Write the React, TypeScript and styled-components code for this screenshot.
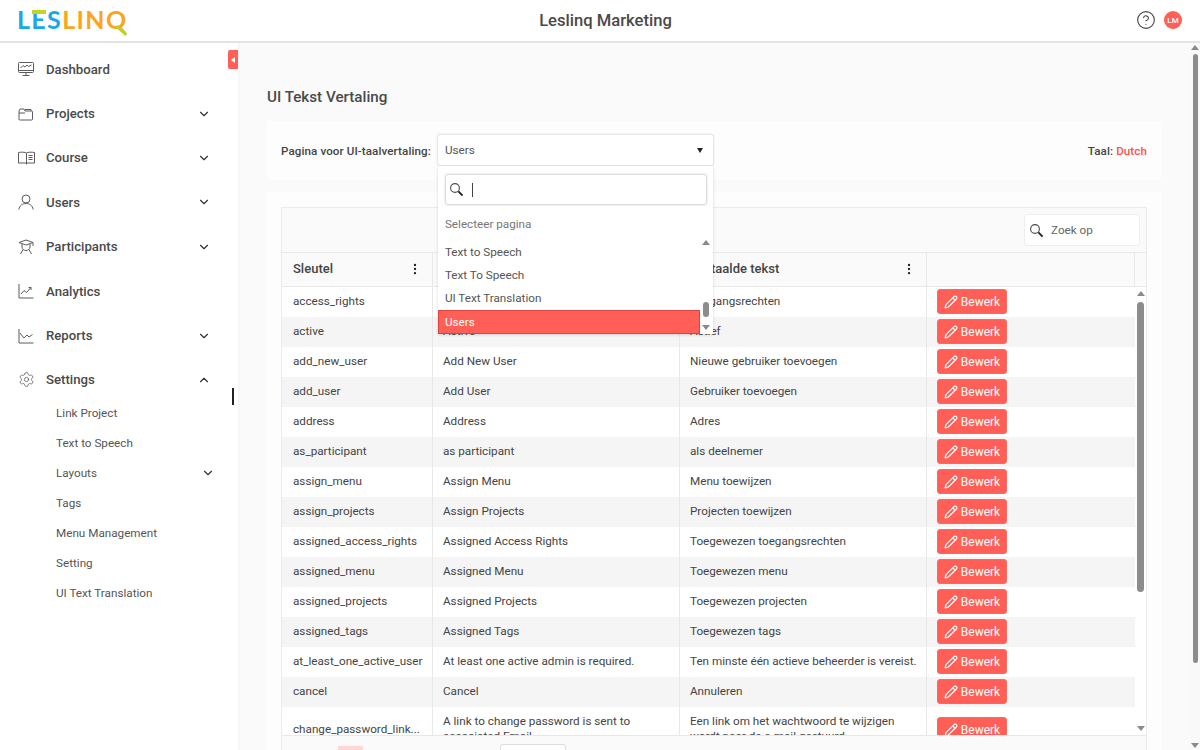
import React from 'react';
import styled, { createGlobalStyle } from 'styled-components';
import { ChevronDown, ChevronUp, CircleHelp, EllipsisVertical, Pencil, Settings } from 'lucide-react';

const GlobalStyle = createGlobalStyle`
  html, body {
    margin: 0;
    height: 100%;
    overflow: hidden;
    font-family: Roboto, "Liberation Sans", sans-serif;
    color: #444;
  }
  * { box-sizing: border-box; }
`;

const Page = styled.div`
  position: relative;
  width: 1200px;
  height: 750px;
  display: flex;
  flex-direction: column;
  overflow: hidden;
  background: #fafafa;
`;

const Header = styled.header`
  flex: 0 0 43px;
  display: flex;
  align-items: center;
  justify-content: space-between;
  padding: 0 18px;
  background: #fff;
  border-bottom: 2px solid #e4e4e4;
`;

const Logo = styled.div`
  width: 130px;
  display: flex;
  font-family: Lato, sans-serif;
  font-size: 25px;
  line-height: 25px;
  font-weight: 700;
  letter-spacing: 1.35px;
  margin-top: -3px;
  margin-left: -1px;
`;

const LogoPart = styled.span<{ $color: string }>`
  color: ${({ $color }) => $color};
`;

const LogoQ = styled.span`
  position: relative;
  color: #f9a61e;

  &::after {
    content: '';
    position: absolute;
    right: -1px;
    bottom: 0;
    width: 13px;
    height: 3px;
    background: #bfd21f;
    transform: rotate(42deg);
  }
`;

const LogoE = styled.span`
  position: relative;
  color: #19a8e8;

  &::before {
    content: '';
    position: absolute;
    left: 1px;
    right: 1px;
    top: 3px;
    height: 4px;
    background: #c4d423;
  }
`;

const HeaderTitle = styled.div`
  font-size: 16.6px;
  font-weight: 500;
  color: #4a4a4a;
`;

const HeaderActions = styled.div`
  width: 118px;
  display: flex;
  align-items: center;
  justify-content: flex-end;
  gap: 8px;
  margin-top: -1px;
`;

const Avatar = styled.div`
  width: 18px;
  height: 18px;
  border-radius: 50%;
  background: #ff5f56;
  color: #fff;
  font-size: 8px;
  font-weight: 500;
  display: flex;
  align-items: center;
  justify-content: center;
`;

const Body = styled.div`
  flex: 1;
  min-height: 0;
  display: flex;
`;

const Sidebar = styled.nav`
  position: relative;
  flex: 0 0 238px;
  background: #fff;
  padding: 4px 0 0 0;
  box-shadow: 1px 0 2px rgba(0, 0, 0, 0.03);
`;

const NavItem = styled.div`
  height: 44.4px;
  display: flex;
  align-items: center;
  padding: 0 27px 0 18px;
  font-size: 13.2px;
  font-weight: 500;
  color: #4a4a4a;
`;

const NavIcon = styled.span`
  width: 28px;
  display: flex;
  color: #5c5c5c;
`;

const NavLabel = styled.span`
  flex: 1;
`;

const SubNav = styled.div`
  display: flex;
  flex-direction: column;
  margin-top: -4px;
`;

const SubItem = styled.div`
  height: 30px;
  display: flex;
  align-items: center;
  justify-content: space-between;
  padding: 0 23px 0 56px;
  font-size: 11.7px;
  color: #555;
`;

const CollapseTab = styled.div`
  position: absolute;
  top: 7px;
  right: 0;
  width: 10px;
  height: 19px;
  background: #ff5f56;
  border-radius: 2px 0 0 2px;
  display: flex;
  align-items: center;
  justify-content: center;

  &::before {
    content: '';
    border-style: solid;
    border-width: 3px 4px 3px 0;
    border-color: transparent #fff transparent transparent;
  }
`;

const MouseCaret = styled.div`
  position: absolute;
  top: 345px;
  left: 232px;
  width: 2px;
  height: 17px;
  background: #222;
`;

const Main = styled.main`
  flex: 1;
  min-width: 0;
  padding: 43px 29px 0 29px;
  display: flex;
  flex-direction: column;
`;

const PageTitle = styled.h1`
  margin: 0 0 13px;
  font-size: 15.2px;
  line-height: 22px;
  font-weight: 500;
  color: #4a4a4a;
`;

const FilterPanel = styled.section`
  height: 59px;
  background: #fdfdfd;
  display: flex;
  align-items: center;
  justify-content: space-between;
  padding: 0 14px;
  margin-bottom: 12px;
  position: relative;
  z-index: 2;
`;

const FilterLeft = styled.div`
  display: flex;
  align-items: center;
  gap: 6px;
`;

const BoldLabel = styled.span`
  font-size: 11.6px;
  font-weight: 500;
  color: #444;
  letter-spacing: 0.1px;
`;

const LangValue = styled.span`
  color: #ff5147;
`;

const SelectWrap = styled.div`
  position: relative;
  width: 277px;
  margin-top: -1px;
`;

const SelectBox = styled.div`
  height: 32px;
  display: flex;
  align-items: center;
  justify-content: space-between;
  padding: 0 10px 0 7px;
  background: #fff;
  border: 1px solid #e8e8e8;
  border-radius: 3px;
  box-shadow: 0 0 2px rgba(0, 0, 0, 0.12);
  font-size: 11.7px;
  color: #555;
`;

const Caret = styled.span`
  border-style: solid;
  border-width: 5px 3.5px 0 3.5px;
  border-color: #222 transparent transparent transparent;
`;

const Dropdown = styled.div`
  position: absolute;
  top: 32px;
  left: 1px;
  right: 1px;
  height: 168px;
  background: #fff;
  box-shadow: 0 1px 3px rgba(0, 0, 0, 0.15);
  display: flex;
  flex-direction: column;
  overflow: hidden;
`;

const DropSearch = styled.div`
  flex: 0 0 31px;
  margin: 8px 6px 0 7px;
  display: flex;
  align-items: center;
  gap: 8px;
  padding-left: 3px;
  border: 1px solid #ddd;
  border-radius: 3px;
  box-shadow: 0 0 2px rgba(0, 0, 0, 0.2);
  color: #555;
`;

const TextCursor = styled.span`
  width: 1px;
  height: 14px;
  background: #444;
`;

const DropHint = styled.div`
  flex: 0 0 32px;
  font-size: 11.7px;
  color: #777;
  padding: 11px 7px 0;
  line-height: 16px;
`;

const DropBody = styled.div`
  flex: 1;
  display: flex;
  min-height: 0;
`;

const DropList = styled.div`
  flex: 1;
  padding-top: 3px;
`;

const DropItem = styled.div<{ $active?: boolean }>`
  height: 23.4px;
  display: flex;
  align-items: center;
  padding-left: ${({ $active }) => ($active ? '6px' : '7px')};
  font-size: 11.7px;
  color: ${({ $active }) => ($active ? '#fff' : '#555')};
  background: ${({ $active }) => ($active ? '#ff5f56' : 'transparent')};
  border: ${({ $active }) => ($active ? '1px solid #d9453d' : 'none')};
`;

const ScrollTrack = styled.div<{ $width: number }>`
  flex: 0 0 ${({ $width }) => $width}px;
  position: relative;
  display: flex;
  flex-direction: column;
  align-items: center;
`;

const DropScroll = styled(ScrollTrack)`
  padding: 3px 0 4px;
`;

const GridScroll = styled(ScrollTrack)`
  padding: 4px 0;
`;

const ScrollUp = styled.span`
  flex: none;
  border-style: solid;
  border-width: 0 4px 5px 4px;
  border-color: transparent transparent #8a8a8a transparent;
`;

const ScrollDown = styled.span`
  flex: none;
  border-style: solid;
  border-width: 5px 4px 0 4px;
  border-color: #8a8a8a transparent transparent transparent;
`;

const ScrollThumb = styled.span<{ $width: number; $height: number; $top: number }>`
  flex: none;
  width: ${({ $width }) => $width}px;
  height: ${({ $height }) => $height}px;
  margin-top: ${({ $top }) => $top}px;
  background: #8c8c8c;
  border-radius: 4px;
`;

const ScrollEnd = styled.span`
  flex: 1;
`;

const GridPanel = styled.section`
  flex: 1;
  min-height: 0;
  background: #fdfdfd;
  padding: 15px 14px 0;
`;

const Grid = styled.div`
  height: 100%;
  display: flex;
  flex-direction: column;
  border: 1px solid #ebebeb;
  border-bottom: none;
  background: #fff;
`;

const GridToolbar = styled.div`
  flex: 0 0 45px;
  display: flex;
  align-items: center;
  justify-content: flex-end;
  padding-right: 6px;
  background: #fafafa;
  border-bottom: 1px solid #e8e8e8;
`;

const SearchBox = styled.div`
  width: 116px;
  height: 32px;
  display: flex;
  align-items: center;
  gap: 7px;
  padding-left: 4px;
  background: #fff;
  border: 1px solid #eee;
  border-radius: 3px;
  font-size: 11.7px;
  color: #666;
`;

const HeadRow = styled.div`
  flex: 0 0 34px;
  display: flex;
  background: #fafafa;
  border-bottom: 1px solid #e8e8e8;
`;

const HeadCell = styled.div<{ $width: number }>`
  flex: 0 0 ${({ $width }) => $width}px;
  display: flex;
  align-items: center;
  justify-content: space-between;
  padding: 0 10px 2px 11px;
  font-size: 13px;
  font-weight: 500;
  color: #444;
  border-right: 1px solid #e8e8e8;
`;

const GridBody = styled.div`
  flex: 1;
  min-height: 0;
  display: flex;
  overflow: hidden;
`;

const Rows = styled.div`
  width: 853px;
`;

const Row = styled.div<{ $height: number; $odd: boolean }>`
  height: ${({ $height }) => $height}px;
  display: flex;
  background: ${({ $odd }) => ($odd ? '#f5f5f5' : '#fff')};
`;

const Cell = styled.div<{ $width: number; $plain?: boolean }>`
  flex: 0 0 ${({ $width }) => $width}px;
  display: flex;
  align-items: center;
  padding: 0 5px ${({ $plain }) => ($plain ? '1px' : '2px')} 10px;
  font-size: 11.7px;
  line-height: 15px;
  color: #444;
  border-right: ${({ $plain }) => ($plain ? 'none' : '1px solid #e8e8e8')};
  overflow: hidden;

  &:first-child {
    padding-left: 11px;
  }
`;

const EditButton = styled.button`
  width: 70px;
  height: 25px;
  display: flex;
  align-items: center;
  justify-content: center;
  gap: 3px;
  padding: 0;
  border: 1px solid #fb6a62;
  border-radius: 3px;
  background: #ff5f56;
  color: #fff;
  font-family: Roboto, sans-serif;
  font-size: 12px;
`;

const GridFooter = styled.div`
  flex: 0 0 15px;
  position: relative;
  background: #fafafa;
  border-top: 1px solid #e8e8e8;
`;

const FooterPage = styled.span`
  position: absolute;
  left: 56px;
  top: 10px;
  width: 25px;
  height: 12px;
  background: #ffd6d3;
`;

const FooterSelect = styled.span`
  position: absolute;
  left: 218px;
  top: 8px;
  width: 66px;
  height: 14px;
  background: #fff;
  border: 1px solid #ddd;
  border-radius: 3px;
`;

const PageScroll = styled(ScrollTrack)`
  background: #f9f9f9;
  padding: 2px 0;
`;

const SearchIcon = () => (
  <svg width="15" height="15" viewBox="0 0 15 15" fill="none" stroke="#4a4a4a">
    <circle cx="6" cy="6" r="4.4" strokeWidth="1.1" />
    <path d="M9.4 9.4 13.6 13.6" strokeWidth="1.9" stroke="#222" />
  </svg>
);

const DashboardIcon = () => (
  <svg width="16" height="16" viewBox="0 0 16 16" fill="none" stroke="currentColor" strokeWidth="1">
    <rect x="0.5" y="1.5" width="15" height="10" rx="1" />
    <path d="M0.5 9.5h15M8 11.5v2.5M4.5 14.5h7M2.5 7l2.5-2.5 2 1.5 2-2 1.5 1.5L13.5 4" />
  </svg>
);

const FolderIcon = () => (
  <svg width="16" height="16" viewBox="0 0 16 16" fill="none" stroke="currentColor" strokeWidth="1">
    <path d="M1 14V5l1-2h4l1 2h6.500c.8 0 1 .5 1 1v7c0 .7-.4 1-1 1H1.500" />
    <path d="M13 5V3.500H7M1 7h6" />
  </svg>
);

const BookIcon = () => (
  <svg width="17" height="16" viewBox="0 0 17 16" fill="none" stroke="currentColor" strokeWidth="1">
    <path d="M8.500 3C7 2 3 2 .5 2.500v10.500h8v1.500M8.500 3c1.500-1 5-1 8-.5V13h-8M8.500 3v10" />
    <path d="M10.500 5.500h4M10.500 7.500h4M10.500 9.500h4" />
  </svg>
);

const UserIcon = () => (
  <svg width="16" height="16" viewBox="0 0 16 16" fill="none" stroke="currentColor" strokeWidth="1">
    <circle cx="8" cy="5" r="4" />
    <path d="M.8 15.500C1.500 11.500 4.500 9.500 8 9.500s6.500 2 7.200 6" />
  </svg>
);

const ParticipantIcon = () => (
  <svg width="16" height="16" viewBox="0 0 16 16" fill="none" stroke="currentColor" strokeWidth="1">
    <path d="M8 1 1 3.500 8 6l7-2.500L8 1ZM4 5v3c0 2 2 3.500 4 3.500S12 10 12 8V5M15 3.500V7M5 10.500 2.500 15M11 10.500l2.500 4.500" />
  </svg>
);

const AnalyticsIcon = () => (
  <svg width="16" height="16" viewBox="0 0 16 16" fill="none" stroke="currentColor" strokeWidth="1">
    <path d="M1 1v14h14.500M3 11l3-3.500 2.500 2L13 4.500M10.500 4.500H13V7" />
  </svg>
);

const ReportsIcon = () => (
  <svg width="16" height="16" viewBox="0 0 16 16" fill="none" stroke="currentColor" strokeWidth="1">
    <path d="M1 1v14h14.500M2 5l4 5 3-3 2 2 3.500-2.500" />
  </svg>
);

const navTop = [
  { label: 'Dashboard', icon: <DashboardIcon /> },
  { label: 'Projects', icon: <FolderIcon />, more: true },
  { label: 'Course', icon: <BookIcon />, more: true },
  { label: 'Users', icon: <UserIcon />, more: true },
  { label: 'Participants', icon: <ParticipantIcon />, more: true },
  { label: 'Analytics', icon: <AnalyticsIcon /> },
  { label: 'Reports', icon: <ReportsIcon />, more: true },
];

const subItems = ['Link Project', 'Text to Speech', 'Layouts', 'Tags', 'Menu Management', 'Setting', 'UI Text Translation'];

const rows = [
  ['access_rights', 'Access Rights', 'Toegangsrechten'],
  ['active', 'Active', 'Actief'],
  ['add_new_user', 'Add New User', 'Nieuwe gebruiker toevoegen'],
  ['add_user', 'Add User', 'Gebruiker toevoegen'],
  ['address', 'Address', 'Adres'],
  ['as_participant', 'as participant', 'als deelnemer'],
  ['assign_menu', 'Assign Menu', 'Menu toewijzen'],
  ['assign_projects', 'Assign Projects', 'Projecten toewijzen'],
  ['assigned_access_rights', 'Assigned Access Rights', 'Toegewezen toegangsrechten'],
  ['assigned_menu', 'Assigned Menu', 'Toegewezen menu'],
  ['assigned_projects', 'Assigned Projects', 'Toegewezen projecten'],
  ['assigned_tags', 'Assigned Tags', 'Toegewezen tags'],
  ['at_least_one_active_user', 'At least one active admin is required.', 'Ten minste één actieve beheerder is vereist.'],
  ['cancel', 'Cancel', 'Annuleren'],
  [
    'change_password_link...',
    'A link to change password is sent to associated Email',
    'Een link om het wachtwoord te wijzigen wordt naar de e-mail gestuurd',
  ],
];

const widths = [151, 247, 247, 208];

export default function App() {
  return (
    <Page>
      <GlobalStyle />
      <Header>
        <Logo>
          <LogoPart $color="#19a8e8">L</LogoPart>
          <LogoE>E</LogoE>
          <LogoPart $color="#19a8e8">S</LogoPart>
          <LogoPart $color="#f9a61e">LIN</LogoPart>
          <LogoQ>Q</LogoQ>
        </Logo>
        <HeaderTitle>Leslinq Marketing</HeaderTitle>
        <HeaderActions>
          <CircleHelp size={20} strokeWidth={1.3} color="#444" />
          <Avatar>LM</Avatar>
        </HeaderActions>
      </Header>
      <Body>
        <Sidebar>
          <CollapseTab />
          <MouseCaret />
          {navTop.map((item) => (
            <NavItem key={item.label}>
              <NavIcon>{item.icon}</NavIcon>
              <NavLabel>{item.label}</NavLabel>
              {item.more && <ChevronDown size={14} color="#333" />}
            </NavItem>
          ))}
          <NavItem>
            <NavIcon>
              <Settings size={17} strokeWidth={1.1} />
            </NavIcon>
            <NavLabel>Settings</NavLabel>
            <ChevronUp size={14} color="#333" />
          </NavItem>
          <SubNav>
            {subItems.map((item) => (
              <SubItem key={item}>
                {item}
                {item === 'Layouts' && <ChevronDown size={14} color="#333" />}
              </SubItem>
            ))}
          </SubNav>
        </Sidebar>
        <Main>
          <PageTitle>UI Tekst Vertaling</PageTitle>
          <FilterPanel>
            <FilterLeft>
              <BoldLabel>Pagina voor UI-taalvertaling:</BoldLabel>
              <SelectWrap>
                <SelectBox>
                  Users
                  <Caret />
                </SelectBox>
                <Dropdown>
                  <DropSearch>
                    <SearchIcon />
                    <TextCursor />
                  </DropSearch>
                  <DropHint>Selecteer pagina</DropHint>
                  <DropBody>
                    <DropList>
                      <DropItem>Text to Speech</DropItem>
                      <DropItem>Text To Speech</DropItem>
                      <DropItem>UI Text Translation</DropItem>
                      <DropItem $active>Users</DropItem>
                    </DropList>
                    <DropScroll $width={13}>
                      <ScrollUp />
                      <ScrollThumb $width={6} $height={15} $top={57} />
                      <ScrollEnd />
                      <ScrollDown />
                    </DropScroll>
                  </DropBody>
                </Dropdown>
              </SelectWrap>
            </FilterLeft>
            <BoldLabel>
              Taal: <LangValue>Dutch</LangValue>
            </BoldLabel>
          </FilterPanel>
          <GridPanel>
            <Grid>
              <GridToolbar>
                <SearchBox>
                  <SearchIcon />
                  Zoek op
                </SearchBox>
              </GridToolbar>
              <HeadRow>
                <HeadCell $width={widths[0]}>
                  Sleutel
                  <EllipsisVertical size={14} color="#222" />
                </HeadCell>
                <HeadCell $width={widths[1]}>
                  Standaardtekst
                  <EllipsisVertical size={14} color="#222" />
                </HeadCell>
                <HeadCell $width={widths[2]}>
                  Vertaalde tekst
                  <EllipsisVertical size={14} color="#222" />
                </HeadCell>
                <HeadCell $width={widths[3]} />
              </HeadRow>
              <GridBody>
                <Rows>
                  {rows.map((row, i) => (
                    <Row key={row[0]} $height={i === 14 ? 46 : 30} $odd={i % 2 === 1}>
                      <Cell $width={widths[0]}>{row[0]}</Cell>
                      <Cell $width={widths[1]}>{row[1]}</Cell>
                      <Cell $width={widths[2]}>{row[2]}</Cell>
                      <Cell $width={widths[3]} $plain>
                        <EditButton>
                          <Pencil size={14} strokeWidth={2} />
                          Bewerk
                        </EditButton>
                      </Cell>
                    </Row>
                  ))}
                </Rows>
                <GridScroll $width={11}>
                  <ScrollUp />
                  <ScrollThumb $width={7} $height={290} $top={6} />
                  <ScrollEnd />
                  <ScrollDown />
                </GridScroll>
              </GridBody>
              <GridFooter>
                <FooterPage />
                <FooterSelect />
              </GridFooter>
            </Grid>
          </GridPanel>
        </Main>
        <PageScroll $width={10}>
          <ScrollUp />
          <ScrollThumb $width={5} $height={609} $top={4} />
          <ScrollEnd />
          <ScrollDown />
        </PageScroll>
      </Body>
    </Page>
  );
}
